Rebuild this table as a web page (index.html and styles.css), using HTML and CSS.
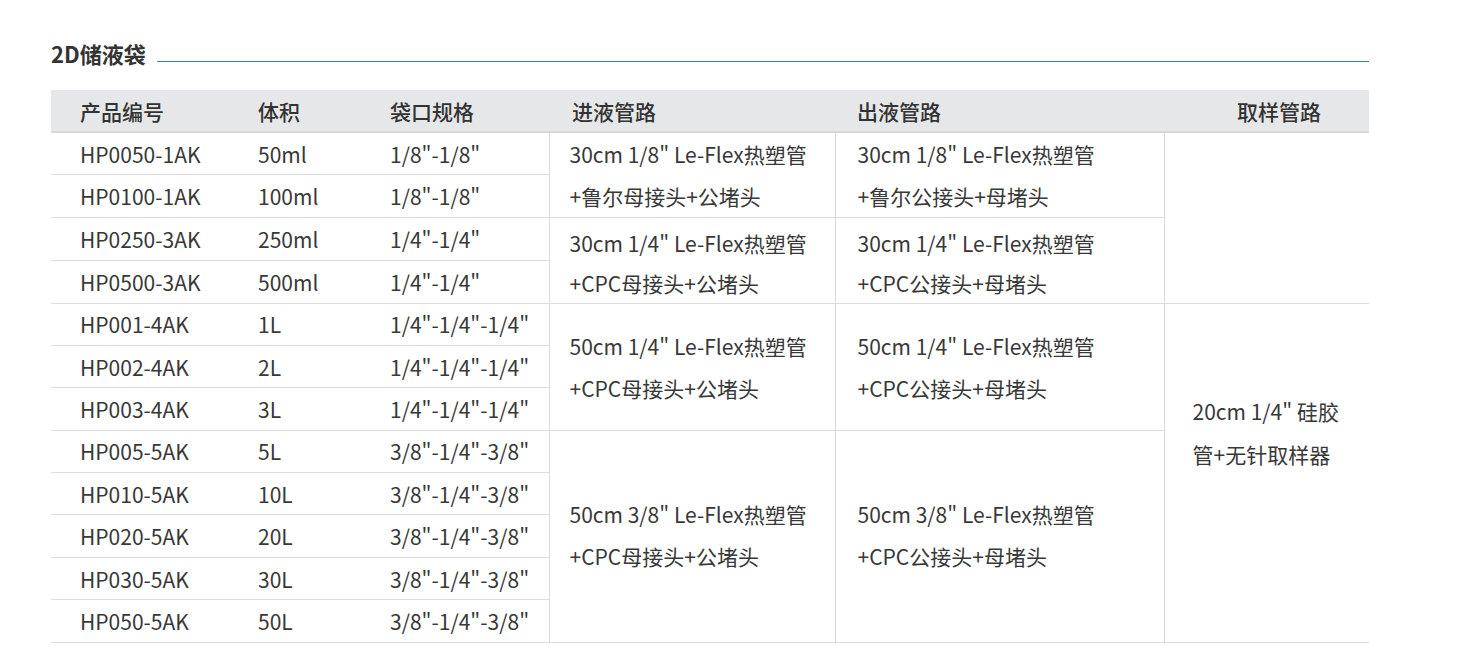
FILE: index.html
```html
<!DOCTYPE html>
<html lang="zh-CN">
<head>
<meta charset="utf-8">
<title>2D储液袋</title>
<link rel="stylesheet" href="styles.css">
</head>
<body>
<div class="page">
  <div class="section-title">
    <h2 class="title-text">2D储液袋</h2>
    <div class="title-line"></div>
  </div>
  <table class="spec">
    <thead>
      <tr>
        <th class="c1">产品编号</th>
        <th class="c2">体积</th>
        <th class="c3">袋口规格</th>
        <th class="c4">进液管路</th>
        <th class="c5">出液管路</th>
        <th class="c6 h6">取样管路</th>
      </tr>
    </thead>
    <tbody>
      <tr>
        <td class="c1">HP0050-1AK</td><td class="c2">50ml</td><td class="c3">1/8"-1/8"</td>
        <td class="c4 span grp-a" rowspan="2">30cm 1/8" Le-Flex热塑管<br>+鲁尔母接头+公堵头</td>
        <td class="c5 span grp-a" rowspan="2">30cm 1/8" Le-Flex热塑管<br>+鲁尔公接头+母堵头</td>
        <td class="c6 span" rowspan="4"></td>
      </tr>
      <tr>
        <td class="c1">HP0100-1AK</td><td class="c2">100ml</td><td class="c3">1/8"-1/8"</td>
      </tr>
      <tr>
        <td class="c1">HP0250-3AK</td><td class="c2">250ml</td><td class="c3">1/4"-1/4"</td>
        <td class="c4 span grp-b" rowspan="2">30cm 1/4" Le-Flex热塑管<br>+CPC母接头+公堵头</td>
        <td class="c5 span grp-b" rowspan="2">30cm 1/4" Le-Flex热塑管<br>+CPC公接头+母堵头</td>
      </tr>
      <tr>
        <td class="c1">HP0500-3AK</td><td class="c2">500ml</td><td class="c3">1/4"-1/4"</td>
      </tr>
      <tr>
        <td class="c1">HP001-4AK</td><td class="c2">1L</td><td class="c3">1/4"-1/4"-1/4"</td>
        <td class="c4 span" rowspan="3">50cm 1/4" Le-Flex热塑管<br>+CPC母接头+公堵头</td>
        <td class="c5 span" rowspan="3">50cm 1/4" Le-Flex热塑管<br>+CPC公接头+母堵头</td>
        <td class="c6 span sample" rowspan="8">20cm 1/4" 硅胶<br>管+无针取样器</td>
      </tr>
      <tr>
        <td class="c1">HP002-4AK</td><td class="c2">2L</td><td class="c3">1/4"-1/4"-1/4"</td>
      </tr>
      <tr>
        <td class="c1">HP003-4AK</td><td class="c2">3L</td><td class="c3">1/4"-1/4"-1/4"</td>
      </tr>
      <tr>
        <td class="c1">HP005-5AK</td><td class="c2">5L</td><td class="c3">3/8"-1/4"-3/8"</td>
        <td class="c4 span grp-d" rowspan="5">50cm 3/8" Le-Flex热塑管<br>+CPC母接头+公堵头</td>
        <td class="c5 span grp-d" rowspan="5">50cm 3/8" Le-Flex热塑管<br>+CPC公接头+母堵头</td>
      </tr>
      <tr>
        <td class="c1">HP010-5AK</td><td class="c2">10L</td><td class="c3">3/8"-1/4"-3/8"</td>
      </tr>
      <tr>
        <td class="c1">HP020-5AK</td><td class="c2">20L</td><td class="c3">3/8"-1/4"-3/8"</td>
      </tr>
      <tr>
        <td class="c1">HP030-5AK</td><td class="c2">30L</td><td class="c3">3/8"-1/4"-3/8"</td>
      </tr>
      <tr>
        <td class="c1">HP050-5AK</td><td class="c2">50L</td><td class="c3">3/8"-1/4"-3/8"</td>
      </tr>
    </tbody>
  </table>
</div>
</body>
</html>
```

FILE: styles.css
```css
html, body {
  margin: 0;
  padding: 0;
  background: #ffffff;
}

body {
  font-family: "Noto Sans CJK SC", "Noto Sans", sans-serif;
  color: #383838;
}

.page {
  padding: 37px 0 0 51px;
  width: 1318px;
}

.section-title {
  display: flex;
  align-items: flex-end;
  height: 32px;
}

.title-text {
  margin: 0;
  font-size: 22px;
  line-height: 32px;
  font-weight: 700;
  color: #333333;
}

.title-line {
  flex: 1;
  margin-left: 11px;
  margin-bottom: 7px;
  height: 1px;
  background: #2a8ab4;
}

.spec {
  margin-top: 21px;
  width: 1318px;
  border-collapse: collapse;
  table-layout: fixed;
  font-size: 21px;
}

.spec th {
  background: #e6e7e8;
  font-weight: 500;
  color: #333333;
  text-align: left;
  height: 42px;
  padding: 0 0 0 29px;
  line-height: 40px;
  border-bottom: 2px solid #d9d9d9;
  box-sizing: border-box;
}

.spec td {
  height: 42.4px;
  padding: 0 0 0 29px;
  line-height: 30px;
  vertical-align: middle;
  white-space: nowrap;
  border-bottom: 1px solid #dcdcdc;
  box-sizing: border-box;
}

.spec td.span {
  line-height: 42px;
}

.spec td.grp-a {
  vertical-align: top;
}

.spec td.grp-b {
  vertical-align: top;
  padding-top: 4.5px;
  line-height: 40px;
}

.spec td.grp-d {
  vertical-align: top;
  padding-top: 62px;
}

.spec .c1 { width: 178px; }
.spec .c2 { width: 132px; }
.spec .c3 { width: 188px; }
.spec .c4 { width: 286px; }
.spec .c5 { width: 329px; }
.spec .c6 { width: 205px; }

.spec td.c4 { padding-left: 20px; border-left: 1px solid #dcdcdc; }
.spec th.c4 { padding-left: 23px; }
.spec td.c5 { padding-left: 22px; border-left: 1px solid #dcdcdc; }
.spec th.c5 { padding-left: 22px; }
.spec td.c6 { padding-left: 28px; border-left: 1px solid #dcdcdc; }
.spec th.h6 { padding-left: 73px; }

.spec td.sample {
  line-height: 43px;
  padding-bottom: 80px;
}
```
